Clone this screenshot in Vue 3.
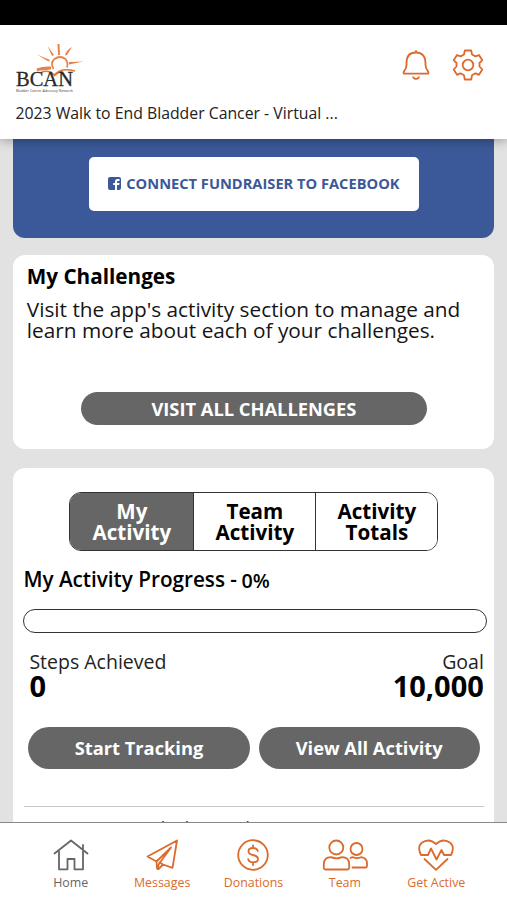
<script setup>
const tabs = [['My', 'Activity'], ['Team', 'Activity'], ['Activity', 'Totals']]
const nav = ['Home', 'Messages', 'Donations', 'Team', 'Get Active']
</script>

<template>
  <div class="screen">
    <div class="status"></div>
    <header class="header">
      <div class="top">
        <svg class="logo" viewBox="0 0 70 52" width="70" height="52">
          <g fill="#e5834c">
            <path d="M31.500 3L38 12L36 13Z" /><path d="M41.500 1L43.500 1L44 12L42 12Z" />
            <path d="M56 4L51 12L49 12.500Q50 7 56 4Z" />
            <path d="M67.500 18.500L53 21.500L53 19Z" />
            <path d="M21 11.500L34 17L32.500 18.500Z" />
            <path d="M20.500 25.500Q27 23 35 23.500L35 26.500L21 28Z" />
          </g>
          <path d="M37.500 26Q34 20 38.500 16Q44 12 49.500 16Q52.500 20 51 24.500" fill="none" stroke="#e5834c" stroke-width="1.800" />
          <path d="M25 29.500Q33 26 38 32Q45 24 59 28M38 33Q44 28 47 29" fill="none" stroke="#e0783c" stroke-width="1.500" />
          <text x="0" y="43" textLength="57" lengthAdjust="spacingAndGlyphs" class="brand">BCAN</text>
          <text x="0" y="48.500" textLength="57" lengthAdjust="spacingAndGlyphs" class="brand-sub">Bladder Cancer Advocacy Network</text>
        </svg>
        <div class="actions">
          <svg class="line" width="28" height="32" viewBox="0 0 28 32">
            <path d="M14 1.800V3.500M4.500 14C4.500 7 8 3.500 14 3.500S23.500 7 23.500 14V16Q23.500 19 25.500 21.500Q27.500 24.700 25.500 24.700H2.500Q.500 24.700 2.500 21.500Q4.500 19 4.500 16ZM11.200 28.300Q14 31.500 16.800 28.300" />
          </svg>
          <svg class="line" width="32" height="32" viewBox="0 0 32 32">
            <path d="M12.800 1.500H19.200L20 5.500L23.500 7.400L27 6L30.300 11.200L27.500 14V17.500L30.300 20.500L27 25.800L23.500 24.300L20 26.300L19.200 30.500H12.800L12 26.300L8.500 24.300L5 25.800L1.700 20.500L4.500 17.500V14L1.700 11.200L5 6L8.500 7.400L12 5.500Z" />
            <circle cx="16" cy="16" r="5.300" />
          </svg>
        </div>
      </div>
      <div class="event">2023 Walk to End Bladder Cancer - Virtual ...</div>
    </header>
    <main class="content">
      <section class="facebook">
        <button class="connect">
          <svg width="13" height="13" viewBox="0 0 13 13"><rect width="13" height="13" rx="2" fill="#3b5998" /><path d="M7 13V8H5.200V6H7V4.500Q7 2 9.500 2H11.500V4H10Q9 4 9 5V6H11.500L11.200 8H9V13Z" fill="#fff" /></svg>
          <span>CONNECT FUNDRAISER TO FACEBOOK</span>
        </button>
      </section>
      <section class="card challenges">
        <h2>My Challenges</h2>
        <p>Visit the app's activity section to manage and<br>learn more about each of your challenges.</p>
        <button class="pill visit">VISIT ALL CHALLENGES</button>
      </section>
      <section class="card activity">
        <div class="tabs">
          <button v-for="(t, i) in tabs" :key="i" :class="{ active: i === 0 }">{{ t[0] }}<br>{{ t[1] }}</button>
        </div>
        <div class="progress-title"><span class="progress-label">My Activity Progress -</span><span class="percent">0%</span></div>
        <div class="bar"></div>
        <div class="stats">
          <div><div class="label">Steps Achieved</div><div class="value">0</div></div>
          <div class="goal"><div class="label">Goal</div><div class="value">10,000</div></div>
        </div>
        <div class="buttons">
          <button class="pill">Start Tracking</button>
          <button class="pill">View All Activity</button>
        </div>
        <hr>
        <p class="more">Any activity totals dropped?</p>
      </section>
    </main>
    <nav class="nav">
      <a v-for="(n, i) in nav" :key="n" :class="{ current: i === 0 }">
        <svg v-if="i === 0" class="line" width="36" height="34" viewBox="0 0 36 34"><path d="M1.500 15.500L18 2.500L34.500 15.500M6 13V31.300H14.500V21H21.500V31.300H30V13M30 11V7" /></svg>
        <svg v-else-if="i === 1" class="line" width="36" height="34" viewBox="0 0 36 34"><path d="M33 2.500L3.500 18.500L12.500 23.500L13 30Q13.500 32 15 30.500L19 26.500L28.500 29.800ZM12.500 23.500L27 9.500L16 24.500L19 26.500M15.500 24.500L13.500 30" /></svg>
        <svg v-else-if="i === 2" class="line" width="36" height="34" viewBox="0 0 36 34"><circle cx="18" cy="17" r="14.800" /><path d="M22.800 13Q22 10 18 10Q13.500 10 13.500 13.200Q13.500 16 18 17Q23 18 23 21Q23 24.300 18 24.300Q14 24.300 13.200 21.200M18 7.500V10M18 24.300V27" /></svg>
        <svg v-else-if="i === 3" class="line" width="46" height="34" viewBox="0 0 46 34"><circle cx="14.300" cy="9.500" r="7" /><circle cx="34.500" cy="11" r="6" /><path d="M1.800 30V26Q2 19.500 9 19.200Q14.500 21.500 20 19.200Q27 19.500 27.200 26V30Q27 31.500 25.500 31.500H3.500Q2 31.500 1.800 30ZM28.500 20Q30 19 31 19.200Q35 21 39 19.200Q45 20 45 25.500V28Q45 29.500 43.500 29.500H30.500" /></svg>
        <svg v-else class="line" width="36" height="34" viewBox="0 0 36 34"><path d="M3 17Q-1 9 3.500 5Q11 -.500 18 6Q25 -.500 32.500 5Q37 9 33 17H26L23.500 12L18.500 21.500L13 10.500L10 17ZM6.500 21L18 31.800L29.500 21" /></svg>
        <span>{{ n }}</span>
      </a>
    </nav>
  </div>
</template>

<style>
body { margin: 0; }
</style>
<style scoped>
* { box-sizing: border-box; }
.screen { width: 507px; height: 900px; display: flex; flex-direction: column; overflow: hidden; background: #e2e2e2; color: #000; font-family: "Open Sans", sans-serif; }
button { font: inherit; border: 0; padding: 0; margin: 0; }
svg { display: block; flex: none; }
.line { fill: none; stroke: currentColor; stroke-width: 1.8; stroke-linecap: round; stroke-linejoin: round; }
.status { flex: none; height: 25px; background: #000; }
.header { flex: none; height: 114px; background: #fff; position: relative; z-index: 1; box-shadow: 0 2px 10px rgba(0,0,0,.3); padding: 18px 23.5px 0 15.5px; }
.top { display: flex; justify-content: space-between; height: 59px; }
.brand { font: 20px "Liberation Serif", serif; fill: #292929; stroke: #292929; stroke-width: .3px; }
.brand-sub { font: 3.8px "Open Sans", sans-serif; fill: #444; }
.actions { display: flex; gap: 22px; padding-top: 6px; color: #db6a2d; }
.event { font-size: 15.8px; line-height: 22px; color: #222; white-space: nowrap; }
.content { flex: 1; min-height: 0; overflow: hidden; padding: 0 12.6px 0 13.4px; }
.facebook { height: 98.5px; background: #3b5998; border-radius: 0 0 12px 12px; padding-top: 18px; }
.connect { display: flex; align-items: center; justify-content: center; gap: 5px; width: 330px; height: 54px; margin: 0 auto; padding-bottom: 2px; border-radius: 5px; background: #fff; color: #3b5998; font-size: 14.65px; font-weight: 700; white-space: nowrap; }
.card { background: #fff; border-radius: 12px; }
.challenges { margin-top: 17.5px; height: 194px; padding: 8px 13.4px 0; }
h2 { margin: 0; font-size: 20.7px; line-height: 27px; font-weight: 700; }
.challenges p { margin: 9px 0 0; font-size: 20.8px; line-height: 21px; white-space: nowrap; color: #151515; }
.pill { display: block; background: #666; color: #fff; font-weight: 700; border-radius: 22px; }
.visit { width: 346px; height: 33px; font-size: 18.3px; margin: 50.5px auto 0; }
.activity { margin-top: 18.5px; height: 400px; padding: 24.5px 7.6px 0 10px; }
.tabs { display: grid; grid-template-columns: 124px 122px 1fr; width: 369px; height: 59px; margin-left: 46px; border: 1px solid #333; border-radius: 12px; overflow: hidden; }
.tabs button { background: #fff; font-size: 20.6px; line-height: 21px; font-weight: 700; border-right: 1px solid #333; }
.tabs button:last-child { border: 0; }
.tabs .active { background: #666; color: #fff; }
.progress-title { display: flex; gap: 4.5px; height: 28px; margin-top: 14px; font-size: 20.7px; line-height: 28px; font-weight: 600; }
.percent { font-size: 19.7px; padding-top: 2px; }
.bar { height: 24px; border: 1.5px solid #333; border-radius: 12px; margin-top: 15.5px; }
.stats { display: flex; justify-content: space-between; padding: 15px 3px 0 6px; }
.label { font-size: 19.5px; line-height: 27px; color: #222; }
.value { font-size: 29px; line-height: 22px; font-weight: 700; }
.goal { text-align: right; }
.buttons { display: grid; grid-template-columns: 1fr 1fr; gap: 9px; padding: 30px 7px 0 5px; }
.buttons .pill { height: 42.5px; font-size: 18.3px; }
hr { border: 0; height: 1px; background: #c5c5c5; margin: 36.5px 3px 0 1px; }
.more { margin: 9px 0 0 6px; font-size: 17.8px; line-height: 24px; color: #333; }
.nav { position: relative; flex: none; height: 78px; background: #fff; border-top: 1px solid #888; display: grid; grid-template-columns: repeat(5, 91.4px); justify-content: center; padding-top: 15px; }
.nav a { display: flex; flex-direction: column; align-items: center; color: #db6a2d; font-size: 12.4px; line-height: 18px; gap: 2px; }
.nav a.current { color: #666; }
</style>
